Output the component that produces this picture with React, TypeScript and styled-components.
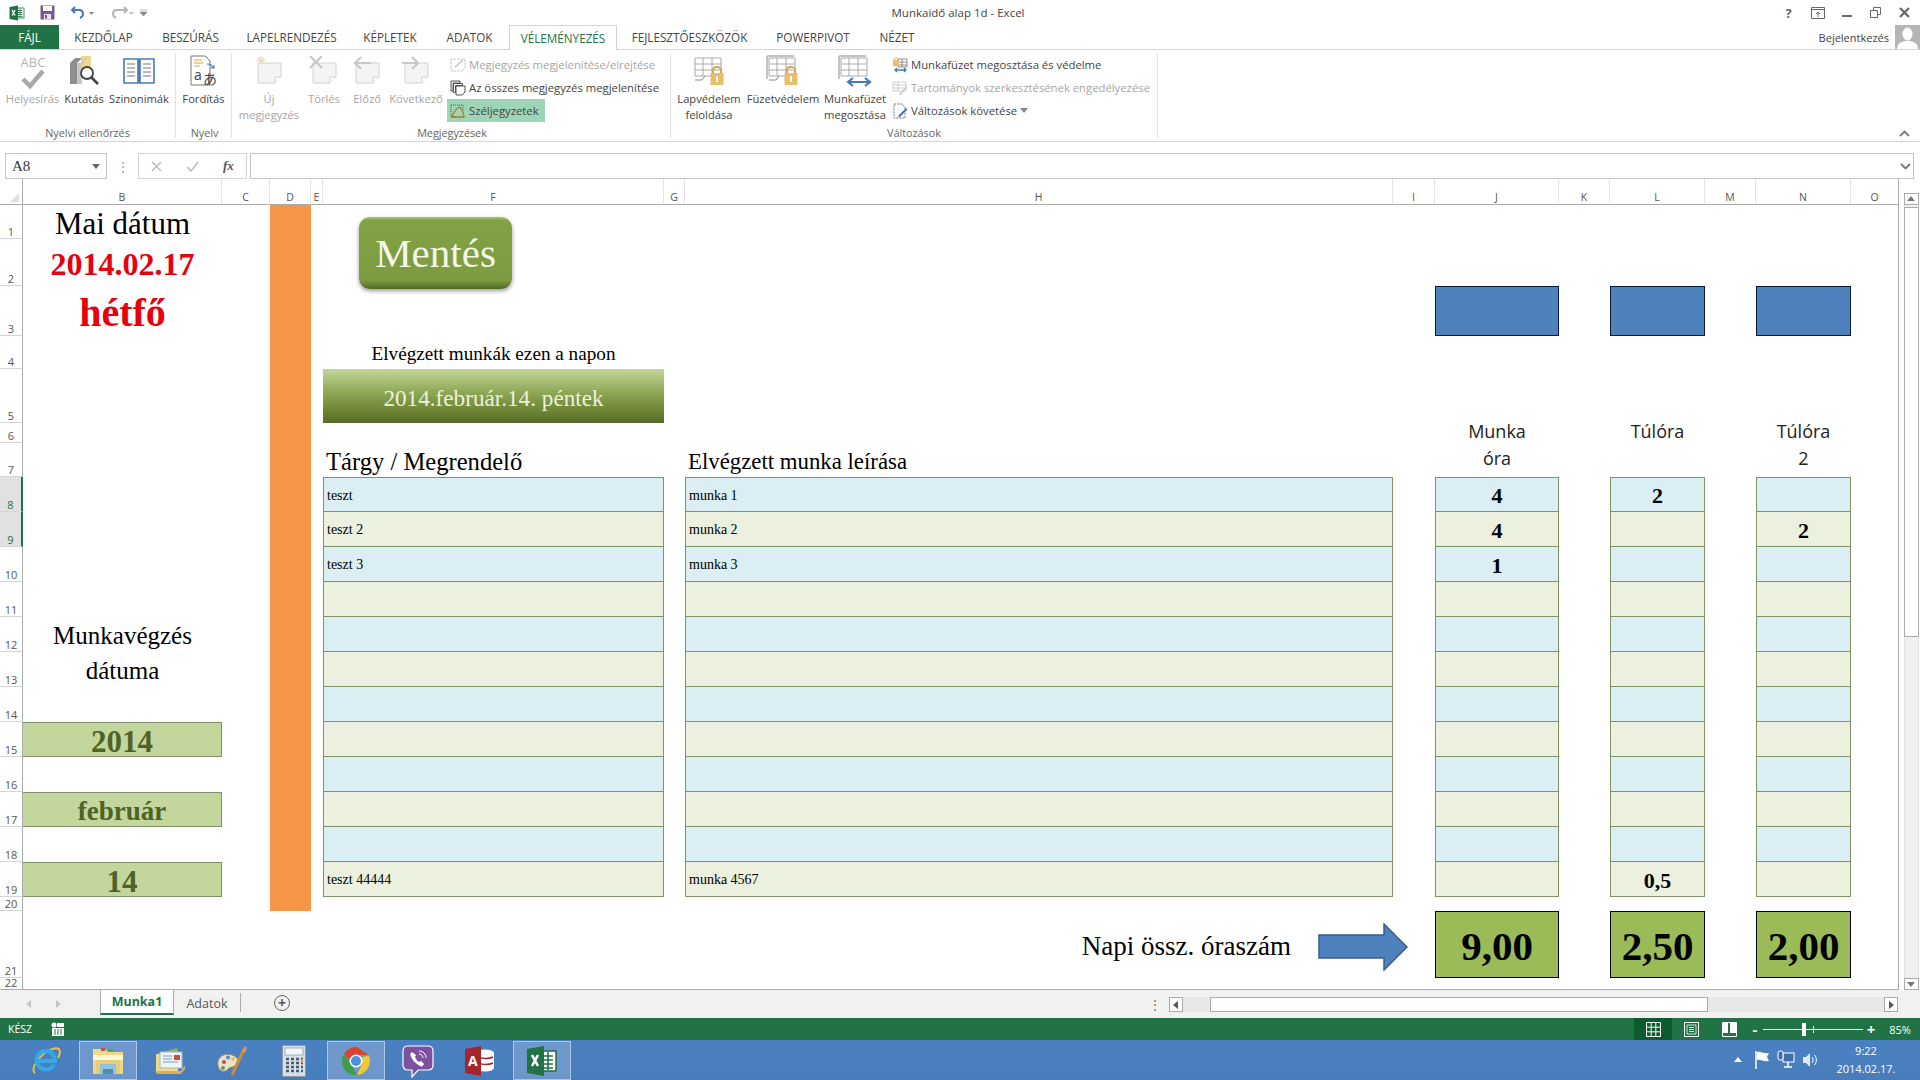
import React from 'react';
import styled, { createGlobalStyle } from 'styled-components';

const GlobalStyle = createGlobalStyle`
  html, body {
    margin: 0;
    padding: 0;
    background: #fff;
    overflow: hidden;
  }
`;

const UI_FONT = '"Open Sans", "Noto Sans", sans-serif';
const SERIF = '"Liberation Serif", "Times New Roman", serif';
const EXCEL_GREEN = '#217346';

const Window = styled.div`
  width: 1920px;
  height: 1080px;
  display: flex;
  flex-direction: column;
  font-family: ${UI_FONT};
  color: #444;
  overflow: hidden;
  background: #fff;
`;

/* title bar */
const TitleBar = styled.div`
  height: 25px;
  display: grid;
  grid-template-columns: 1fr auto 1fr;
  align-items: center;
`;

const QuickAccess = styled.div`
  display: flex;
  align-items: center;
  padding-left: 9px;
  gap: 15px;
`;

const QuickMenu = styled.svg`
  margin-left: -10px;
`;

const TitleText = styled.div`
  font-size: 11.5px;
  color: #444;
  margin-left: -4px;
`;

const WindowControls = styled.div`
  display: flex;
  justify-content: flex-end;
  align-items: center;
  padding-right: 1px;
`;

const WinButton = styled.div`
  width: 29px;
  height: 20px;
  display: flex;
  align-items: center;
  justify-content: center;
  color: #666;
  font-size: 13px;
  font-weight: 700;
`;

/* ribbon tabs */
const TabRow = styled.div`
  height: 25px;
  box-sizing: border-box;
  display: flex;
  border-bottom: 1px solid #d4d4d4;
`;

const RibbonTab = styled.div<{ $w: number; $active?: boolean; $file?: boolean }>`
  width: ${p => p.$w}px;
  box-sizing: border-box;
  display: flex;
  align-items: center;
  justify-content: center;
  font-size: 11.7px;
  line-height: 16px;
  height: ${p => (p.$active ? 25 : 24)}px;
  background: ${p => (p.$file ? EXCEL_GREEN : '#fff')};
  color: ${p => (p.$file ? '#fff' : p.$active ? EXCEL_GREEN : '#444')};
  ${p => p.$active && 'border: 1px solid #d4d4d4; border-bottom: none;'}
`;

const Account = styled.div`
  margin-left: auto;
  display: flex;
  align-items: center;
  gap: 6px;
  font-size: 11px;
  color: #444;
`;

/* ribbon */
const Ribbon = styled.div`
  height: 92px;
  box-sizing: border-box;
  display: flex;
  border-bottom: 1px solid #d4d4d4;
  position: relative;
`;

const RibbonGroup = styled.div<{ $w: number; $pad?: number; $line?: boolean }>`
  width: ${p => p.$w}px;
  box-sizing: border-box;
  margin-top: 3px;
  padding-left: ${p => p.$pad ?? 0}px;
  display: flex;
  flex-direction: column;
  height: 85px;
  ${p => p.$line && 'border-right: 1px solid #e1e1e1;'}
`;

const GroupBody = styled.div`
  flex: 1;
  display: flex;
`;

const GroupLabel = styled.div<{ $shift?: number }>`
  font-size: 10.8px;
  text-align: center;
  color: #666;
  line-height: 14px;
  height: 14px;
  margin: 0 0 -2px ${p => p.$shift ?? 0}px;
`;

const LargeButton = styled.div<{ $w: number; $off?: boolean }>`
  width: ${p => p.$w}px;
  display: flex;
  flex-direction: column;
  align-items: center;
  font-size: 11.2px;
  line-height: 16px;
  text-align: center;
  white-space: nowrap;
  color: ${p => (p.$off ? '#a6a6a6' : '#444')};
`;

const LargeIcon = styled.div`
  height: 36px;
  display: flex;
  align-items: center;
  justify-content: center;
  margin-bottom: 2px;
`;

const SmallColumn = styled.div`
  display: flex;
  flex-direction: column;
  align-items: flex-start;
`;

const SmallButton = styled.div<{ $off?: boolean; $on?: boolean }>`
  height: 23px;
  display: flex;
  align-items: center;
  gap: 3px;
  padding: 0 6px 0 3px;
  font-size: 11.3px;
  white-space: nowrap;
  color: ${p => (p.$off ? '#a6a6a6' : '#444')};
  background: ${p => (p.$on ? '#9fd5b7' : 'transparent')};
`;

const CollapseCaret = styled.svg`
  position: absolute;
  right: 10px;
  bottom: 4px;
`;

/* formula bar */
const FormulaRow = styled.div`
  height: 37px;
  box-sizing: border-box;
  padding: 11px 6px 0 5px;
  display: flex;
`;

const NameBox = styled.div`
  width: 102px;
  box-sizing: border-box;
  border: 1px solid #c6c6c6;
  display: flex;
  align-items: center;
  justify-content: space-between;
  padding: 0 6px 0 6px;
  font-family: ${SERIF};
  font-size: 15px;
  color: #333;
`;

const GripDots = styled.div`
  width: 31px;
  display: flex;
  align-items: center;
  justify-content: center;
  color: #9a9a9a;
  font-size: 12px;
`;

const FormulaButtons = styled.div`
  width: 109px;
  box-sizing: border-box;
  border: 1px solid #d4d4d4;
  display: flex;
  align-items: center;
  gap: 24px;
  padding-left: 12px;
  margin-right: 3px;
  color: #555;
`;

const FxLabel = styled.span`
  font-family: ${SERIF};
  font-style: italic;
  font-weight: 700;
  font-size: 13px;
`;

const FormulaInput = styled.div`
  flex: 1;
  box-sizing: border-box;
  border: 1px solid #c6c6c6;
  display: flex;
  align-items: center;
  justify-content: flex-end;
  padding-right: 2px;
`;

/* sheet */
const SheetArea = styled.div`
  height: 811px;
  display: flex;
`;

const SheetGrid = styled.div`
  position: relative;
  width: 1899px;
  height: 811px;
  display: grid;
  grid-template-columns: 23px 199px 48px 41px 12px 341px 21px 708px 42px 124px 51px 95px 51px 95px 48px;
  grid-template-rows: 26px 34px 47px 50px 33px 54px 20px 34px repeat(12, 35px) 14px 67px 12px;
  overflow: hidden;
  box-sizing: border-box;
  border-bottom: 1px solid #ababab;
  border-right: 1px solid #ababab;
`;

const ColHead = styled.div<{ $c: number }>`
  grid-column: ${p => p.$c};
  grid-row: 1;
  box-sizing: border-box;
  padding-top: 11px;
  font-size: 10.5px;
  line-height: 15px;
  text-align: center;
  color: #555;
  border-bottom: 1px solid #ababab;
  border-right: 1px solid #e4e4e4;
`;

const Corner = styled.div`
  grid-column: 1;
  grid-row: 1;
  box-sizing: border-box;
  border-bottom: 1px solid #ababab;
  border-right: 1px solid #ababab;
  position: relative;
  &::after {
    content: '';
    position: absolute;
    right: 3px;
    bottom: 2px;
    border-style: solid;
    border-width: 0 0 9px 9px;
    border-color: transparent transparent #dfdfdf transparent;
  }
`;

const RowHead = styled.div<{ $r: number; $sel?: boolean }>`
  grid-column: 1;
  grid-row: ${p => p.$r + 1};
  box-sizing: border-box;
  display: flex;
  align-items: flex-end;
  justify-content: center;
  font-size: 11px;
  line-height: 13px;
  color: ${p => (p.$sel ? EXCEL_GREEN : '#555')};
  background: ${p => (p.$sel ? '#e1e1e1' : '#fff')};
  border-bottom: 1px solid #d4d4d4;
  border-right: ${p => (p.$sel ? `2px solid ${EXCEL_GREEN}` : '1px solid #ababab')};
`;

const Cell = styled.div<{ $c: number; $r: number }>`
  grid-column: ${p => p.$c};
  grid-row: ${p => p.$r + 1};
  box-sizing: border-box;
  display: flex;
  align-items: center;
  justify-content: center;
  font-family: ${SERIF};
  color: #000;
  white-space: nowrap;
`;

const TodayLabel = styled(Cell)`
  font-size: 31px;
  padding-top: 4px;
`;

const TodayDate = styled(Cell)`
  font-size: 32px;
  font-weight: 700;
  color: #e8000d;
  padding-top: 3px;
`;

const TodayDay = styled(Cell)`
  font-size: 40px;
  font-weight: 700;
  color: #e8000d;
  padding-top: 2px;
`;

const WorkDateLabel = styled(Cell)`
  font-size: 25px;
  padding-top: 2px;
`;

const DateChip = styled(Cell)<{ $size: number }>`
  font-size: ${p => p.$size}px;
  font-weight: 700;
  color: #4f6228;
  background: #c3d69b;
  border: 1px solid #7f8f6a;
  border-left: none;
  padding-top: 4px;
`;

const OrangeBar = styled.div`
  grid-column: 4;
  grid-row: 2 / 22;
  background: #f79646;
`;

const CaptionCell = styled(Cell)`
  font-size: 19.2px;
  padding-top: 3px;
`;

const BandCell = styled(Cell)`
  font-size: 23.2px;
  padding-top: 4px;
  color: #ebf1de;
  background: linear-gradient(#c3d69b 0%, #8fa957 42%, #6f8736 75%, #566b29 100%);
`;

const ColumnTitle = styled(Cell)<{ $size: number }>`
  font-size: ${p => p.$size}px;
  justify-content: flex-start;
  align-items: flex-end;
  padding: 0 0 1px 3px;
  line-height: 28px;
`;

const HourHead = styled(Cell)`
  font-family: ${UI_FONT};
  font-size: 18px;
  color: #222;
  padding-bottom: 5px;
`;

const DataCell = styled(Cell)<{ $tint: 'blue' | 'green'; $first?: boolean; $left?: boolean }>`
  background: ${p => (p.$tint === 'blue' ? '#daeef3' : '#ebf1de')};
  border: 1px solid #7f9364;
  border-top: ${p => (p.$first ? '1px solid #7f9364' : 'none')};
  justify-content: ${p => (p.$left ? 'flex-start' : 'center')};
  padding: ${p => (p.$left ? '2px 0 0 3px' : '3px 0 0')};
  font-size: ${p => (p.$left ? 14 : 22)}px;
  font-weight: ${p => (p.$left ? 400 : 700)};
`;

const BlueBox = styled(Cell)`
  background: #4f81bd;
  border: 1px solid #0b1a33;
`;

const TotalLabel = styled(Cell)`
  font-size: 27px;
  justify-content: flex-end;
  padding: 3px 102px 0 0;
`;

const TotalBox = styled(Cell)`
  background: #9bbb59;
  border: 1px solid #000;
  font-size: 41px;
  font-weight: 700;
  padding-top: 3px;
`;

const SaveButton = styled.div`
  position: absolute;
  left: 359px;
  top: 38px;
  width: 153px;
  height: 72px;
  box-sizing: border-box;
  border-radius: 11px;
  display: flex;
  align-items: center;
  justify-content: center;
  font-family: ${SERIF};
  font-size: 41px;
  color: #f4f8ea;
  background: linear-gradient(#a9c476 0%, #82a044 5%, #7d9b40 88%, #5d7a2c 96%, #4f6a25 100%);
  box-shadow: 0 2px 4px rgba(0, 0, 0, 0.4);
`;

const ShapeArrow = styled.svg`
  position: absolute;
  left: 1318px;
  top: 744px;
`;

/* scrollbars */
const VScroll = styled.div`
  width: 21px;
  display: flex;
  flex-direction: column;
  align-items: center;
  box-sizing: border-box;
  padding: 14px 0 0 3px;
  background: #fff;
`;

const ScrollButton = styled.div<{ $w?: number; $h?: number }>`
  width: ${p => p.$w ?? 15}px;
  height: ${p => p.$h ?? 12}px;
  flex: none;
  box-sizing: border-box;
  border: 1px solid #ababab;
  background: #fff;
  display: flex;
  align-items: center;
  justify-content: center;
`;

const VTrack = styled.div`
  width: 15px;
  flex: 1;
  background: #f0f0f0;
  box-sizing: border-box;
  border-left: 1px solid #e4e4e4;
  border-right: 1px solid #e4e4e4;
`;

const VThumb = styled.div`
  width: 15px;
  height: 430px;
  margin: 2px 0 0 -1px;
  box-sizing: border-box;
  background: #fff;
  border: 1px solid #ababab;
`;

const SheetTabs = styled.div`
  height: 28px;
  box-sizing: border-box;
  display: flex;
  align-items: stretch;
  background: #f1f1f1;
`;

const TabNav = styled.div`
  width: 100px;
  display: flex;
  align-items: center;
  padding-left: 25px;
  box-sizing: border-box;
  gap: 21px;
`;

const SheetTab = styled.div<{ $active?: boolean; $w: number }>`
  width: ${p => p.$w}px;
  height: 26px;
  box-sizing: border-box;
  display: flex;
  align-items: center;
  justify-content: center;
  font-size: 12.5px;
  font-weight: ${p => (p.$active ? 700 : 400)};
  color: ${p => (p.$active ? EXCEL_GREEN : '#555')};
  background: ${p => (p.$active ? '#fff' : 'transparent')};
  border-bottom: ${p => (p.$active ? `2px solid ${EXCEL_GREEN}` : 'none')};
  ${p => p.$active && 'border-left: 1px solid #ababab; border-right: 1px solid #ababab;'}
  ${p => p.$active && 'margin-top: -1px; padding-top: 1px;'}
`;

const TabDivider = styled.div`
  width: 1px;
  height: 19px;
  margin-top: 3px;
  background: #ababab;
`;

const AddSheet = styled.div`
  margin: 5px 0 0 33px;
  width: 16px;
  height: 16px;
  box-sizing: border-box;
  border: 1px solid #666;
  border-radius: 50%;
  color: #555;
  display: flex;
  align-items: center;
  justify-content: center;
  font-size: 14px;
  font-weight: 700;
  line-height: 1;
`;

const HScroll = styled.div`
  margin: 7px 22px 0 auto;
  height: 15px;
  display: flex;
  align-items: center;
`;

const HDots = styled.div`
  width: 20px;
  color: #777;
  font-size: 12px;
  text-align: left;
`;

const HTrack = styled.div`
  width: 701px;
  height: 15px;
  background: #e8e8e8;
  padding-left: 27px;
  box-sizing: border-box;
`;

const HThumb = styled.div`
  width: 498px;
  height: 15px;
  box-sizing: border-box;
  background: #fff;
  border: 1px solid #ababab;
`;

/* status bar */
const StatusBar = styled.div`
  height: 22px;
  background: ${EXCEL_GREEN};
  color: #fff;
  display: flex;
  align-items: center;
  font-size: 10.5px;
  padding-left: 8px;
`;

const StatusIcon = styled.svg`
  margin-left: 19px;
`;

const StatusRight = styled.div`
  margin-left: auto;
  display: flex;
  align-items: center;
  height: 22px;
`;

const ViewButton = styled.div<{ $on?: boolean }>`
  width: 38px;
  height: 22px;
  display: flex;
  align-items: center;
  justify-content: center;
  background: ${p => (p.$on ? '#0a5c2e' : 'transparent')};
`;

const ZoomGroup = styled.div`
  width: 126px;
  margin-left: 2px;
  display: flex;
  align-items: center;
`;

const ZoomSign = styled.div`
  width: 10px;
  text-align: center;
  font-size: 15px;
  font-weight: 700;
`;

const ZoomTrack = styled.div`
  flex: 1;
  height: 1px;
  background: #fff;
  margin: 0 3px;
  position: relative;
`;

const ZoomThumb = styled.div`
  position: absolute;
  left: 39px;
  top: -6px;
  width: 4px;
  height: 13px;
  background: #fff;
`;

const ZoomTick = styled.div`
  position: absolute;
  left: 50px;
  top: -3px;
  width: 1px;
  height: 7px;
  background: #fff;
`;

const ZoomValue = styled.div`
  width: 40px;
  margin-left: 4px;
  text-align: center;
  font-size: 11px;
`;

/* taskbar */
const Taskbar = styled.div`
  height: 40px;
  background: linear-gradient(#4a80c2, #4a7fbf 60%, #477bb9);
  display: flex;
  padding-left: 15px;
  color: #fff;
`;

const TaskSlot = styled.div<{ $on?: boolean }>`
  width: 58px;
  margin: 1px 2px 0;
  box-sizing: border-box;
  display: flex;
  align-items: center;
  justify-content: center;
  ${p =>
    p.$on &&
    'background: rgba(255,255,255,0.2); border: 1px solid rgba(255,255,255,0.45);'}
`;

const Tray = styled.div`
  margin-left: auto;
  display: flex;
  align-items: center;
`;

const TrayIcon = styled.div`
  width: 24px;
  display: flex;
  align-items: center;
  justify-content: center;
`;

const Clock = styled.div`
  width: 98px;
  box-sizing: border-box;
  text-align: center;
  font-size: 11px;
  line-height: 18px;
  padding-right: 10px;
`;

/* icons */
const ExcelMark: React.FC<{ s: number }> = ({ s }) => (
  <svg width={s} height={s} viewBox="0 0 32 32">
    <rect x="14" y="6" width="16" height="20" fill="#fff" stroke="#217346" strokeWidth="1.6" />
    <path d="M18 11h9M18 15h9M18 19h9M18 23h9M22 7v18" stroke="#217346" strokeWidth="1.6" />
    <path d="M1 4l17-3v30L1 28z" fill="#217346" />
    <path d="M6 10l6 11M12 10l-6 11" stroke="#fff" strokeWidth="2.6" />
  </svg>
);

const SaveIcon = () => (
  <svg width="15" height="15" viewBox="0 0 15 15">
    <rect x="0.5" y="0.5" width="14" height="14" fill="#7a5a96" />
    <rect x="3" y="1" width="9" height="5" fill="#fff" />
    <rect x="4" y="9" width="7" height="5.5" fill="#e9e3ee" />
    <rect x="5" y="10" width="2" height="3.5" fill="#7a5a96" />
  </svg>
);

const UndoIcon: React.FC<{ off?: boolean }> = ({ off }) => (
  <svg width="25" height="15" viewBox="0 0 25 15" fill="none">
    {off ? (
      <path d="M14 2l3 3-3 3M16 5H7c-3 0-4 2-4 4s1 3 3 4" stroke="#b5b5b5" strokeWidth="2" />
    ) : (
      <path d="M5 2L2 5l3 3M3 5h6c3 0 4 2 4 4s-1 3-3 4" stroke="#4a7ab5" strokeWidth="2" />
    )}
    <path d="M19 7h5l-2.5 3z" fill={off ? '#c0c0c0' : '#888'} />
  </svg>
);

const NoteIcon: React.FC<{ kind: 'new' | 'del' | 'prev' | 'next' }> = ({ kind }) => (
  <svg width="30" height="30" viewBox="0 0 30 30" fill="none">
    <path d="M4 7h23v14l-6 6H4z" fill="#f4f4f4" stroke="#d2d2d2" />
    <path d="M21 27v-6h6" stroke="#d2d2d2" fill="#fff" />
    {kind === 'new' && (
      <path d="M7 0v9M2.5 4.500h9M3.800 1.300l6.400 6.400M10.200 1.300l-6.400 6.400" stroke="#e6e0c8" strokeWidth="1.400" />
    )}
    {kind === 'del' && <path d="M1 0l12 12M13 0L1 12" stroke="#c8c8c8" strokeWidth="2.200" />}
    {kind === 'prev' && <path d="M19 7H3M9 1L3 7l6 6" stroke="#c8c8c8" strokeWidth="2.200" />}
    {kind === 'next' && <path d="M1 7h16M11 1l6 6-6 6" stroke="#c8c8c8" strokeWidth="2.200" />}
  </svg>
);

const SpellIcon = () => (
  <svg width="30" height="36" viewBox="0 0 30 36" fill="none">
    <text x="15" y="14" textAnchor="middle" fontFamily={UI_FONT} fontSize="13" fill="#b4b4b4">
      ABC
    </text>
    <path d="M5 26l7 7L25 18" stroke="#a8a8a8" strokeWidth="4.500" />
  </svg>
);

const ResearchIcon = () => (
  <svg width="32" height="32" viewBox="0 0 32 32" fill="none">
    <path d="M13 1h10v20H13z" fill="#f0d58c" />
    <path d="M2 8l5-5h7l-5 5v21H2z" fill="#8f8f8f" />
    <rect x="9" y="8" width="5" height="21" fill="#c8c8c8" />
    <path d="M14 8l5-6" stroke="#bbb" />
    <circle cx="19" cy="18" r="6" fill="#fff" stroke="#444" strokeWidth="1.800" />
    <path d="M23 22l7 7" stroke="#444" strokeWidth="2.600" />
  </svg>
);

const ThesaurusIcon = () => (
  <svg width="32" height="28" viewBox="0 0 32 28" fill="none">
    <path d="M1 2h14v24H1zM17 2h14v24H17z" fill="#fff" stroke="#4a7ab5" strokeWidth="1.600" />
    <path d="M15 2h2v24h-2z" fill="#4a7ab5" />
    <path d="M4 7h8M4 11h8M4 15h8M4 19h8M20 7h8M20 11h8M20 15h8M20 19h8" stroke="#777" />
  </svg>
);

const TranslateIcon = () => (
  <svg width="30" height="32" viewBox="0 0 30 32" fill="none">
    <path d="M2 1h14l5 5v24H2z" fill="#fff" stroke="#777" />
    <path d="M5 5h8M5 8h9M5 11h6" stroke="#d5a93a" strokeWidth="1.200" />
    <path d="M18 9c3 0 5 1 6 4M25 10v3h-3" stroke="#4a7ab5" strokeWidth="1.200" />
    <text x="5" y="25" fontFamily={UI_FONT} fontSize="14" fill="#444">
      a
    </text>
    <text x="14" y="29" fontFamily='"Noto Sans CJK JP", sans-serif' fontSize="14" fill="#444">
      あ
    </text>
  </svg>
);

const LockSheetIcon: React.FC<{ kind: 'lock' | 'book' | 'share' }> = ({ kind }) => (
  <svg width="34" height="34" viewBox="0 0 34 34" fill="none">
    {kind !== 'lock' && <path d="M1 25V2h27" stroke="#888" />}
    <path d="M3 4h26v18H3zM3 10h26M3 16h26M11 4v18M20 4v18" stroke="#a0a0a0" fill="#fff" strokeWidth="0.900" />
    {kind !== 'share' && (
      <>
        <path d="M21 19v-3c0-4 8-4 8 0v3" stroke="#d5a95c" strokeWidth="2" />
        <rect x="18.500" y="19" width="13" height="12" fill="#e8bd6b" />
        <rect x="24" y="22" width="2" height="6" fill="#fff" />
      </>
    )}
    {kind === 'share' && (
      <path d="M11 28h20M15 24l-5 4 5 4M27 24l5 4-5 4" stroke="#4a7ab5" strokeWidth="2.200" />
    )}
    {kind !== 'share' && <path d="M3 26h7l3-4" stroke="#888" />}
  </svg>
);

const MiniIcon: React.FC<{ kind: 'show' | 'all' | 'ink' | 'protect' | 'ranges' | 'track' }> = ({ kind }) => (
  <svg width="16" height="16" viewBox="0 0 16 16" fill="none">
    {kind === 'show' && (
      <>
        <path d="M1 2h14v9l-3 3H1z" stroke="#c0c0c0" strokeDasharray="2 1" />
        <path d="M5 10l8-7" stroke="#c0c0c0" strokeWidth="1.500" />
      </>
    )}
    {kind === 'all' && (
      <>
        <path d="M1 1h9v2H3v8H1z" fill="#fff" stroke="#555" />
        <path d="M3.500 3.500h9v2h-7v7h-2z" fill="#fff" stroke="#555" />
        <path d="M6 6h9v6l-3 3H6z" fill="#fff" stroke="#555" />
      </>
    )}
    {kind === 'ink' && (
      <>
        <path d="M1 2h12M1 2v12M1 14h6M13 2v5" stroke="#555" strokeDasharray="1 1" />
        <path d="M2 14C4 8 7 5 10 4c2 3 4 6 4 10z" stroke="#a67a2a" strokeWidth="1.300" />
      </>
    )}
    {kind === 'protect' && (
      <>
        <path d="M6 2h9v8H6zM6 5h9M6 8h9M10 2v8" stroke="#777" fill="#fff" strokeWidth="0.800" />
        <rect x="1" y="3" width="6" height="6" fill="#e8bd6b" />
        <path d="M2 3c0-3 4-3 4 0" stroke="#d5a95c" />
        <path d="M3 13h11M5 11l-2 2 2 2M12 11l2 2-2 2" stroke="#4a7ab5" strokeWidth="1.300" />
      </>
    )}
    {kind === 'ranges' && (
      <>
        <path d="M1 2h13v9H1zM1 5h13M1 8h13M6 2v9" stroke="#c4c4c4" fill="#fff" strokeWidth="0.800" />
        <path d="M7 14l7-7 1 1-7 7z" fill="#c4c4c4" />
      </>
    )}
    {kind === 'track' && (
      <>
        <path d="M2 1h8l3 3v11H2z" stroke="#777" fill="#fff" strokeDasharray="2 1" />
        <path d="M6 13l8-8 1.500 1.500-8 8z" fill="#4a7ab5" />
      </>
    )}
  </svg>
);

const Caret: React.FC<{ c?: string }> = ({ c = '#666' }) => (
  <svg width="8" height="5" viewBox="0 0 8 5">
    <path d="M0 0h8L4 5z" fill={c} />
  </svg>
);

const Chevron = () => (
  <svg width="11" height="7" viewBox="0 0 11 7" fill="none">
    <path d="M1 1l4.500 4.500L10 1" stroke="#777" strokeWidth="1.800" />
  </svg>
);

const Tri: React.FC<{ dir: 'up' | 'down' | 'left' | 'right'; c?: string }> = ({ dir, c = '#777' }) => {
  const d = { up: 'M0 6L4 1l4 5z', down: 'M0 2l4 5 4-5z', left: 'M6 0L1 4l5 4z', right: 'M2 0l5 4-5 4z' }[dir];
  return (
    <svg width="8" height="8" viewBox="0 0 8 8">
      <path d={d} fill={c} />
    </svg>
  );
};

const IeIcon = () => (
  <svg width="32" height="32" viewBox="0 0 32 32" fill="none">
    <path d="M5 28c-5-4 4-18 15-23 6-3 10-2 10 2 0 2-1 4-2 6" stroke="#f2c230" strokeWidth="1.800" />
    <path d="M24 20a9.500 9.500 0 0 1-17-2c-2-7 3-12 9-12 6 0 9 5 9 10H8" stroke="#35a9e6" strokeWidth="4" />
  </svg>
);

const FolderIcon = () => (
  <svg width="34" height="32" viewBox="0 0 34 32" fill="none">
    <path d="M2 4h12l3 3h15v22H2z" fill="#f2d98a" />
    <path d="M2 10h30v5H2z" fill="#fff6d4" />
    <rect x="10" y="3" width="4" height="3" fill="#c9503a" />
    <rect x="17" y="4" width="5" height="3" fill="#5aa14a" />
    <path d="M5 15h24v14H5z" fill="#e9cd76" />
    <path d="M9 19h16v10H9z" fill="#8fc5dd" />
    <path d="M12 24h10v5H12z" fill="#4a8db5" />
  </svg>
);

const LibraryIcon = () => (
  <svg width="32" height="30" viewBox="0 0 32 30" fill="none">
    <path d="M3 8l20-6 2 6z" fill="#8fb257" />
    <path d="M2 25V8h22v17z" fill="#f2d98a" />
    <rect x="6" y="6" width="22" height="16" fill="#eef3f8" stroke="#a9b9c9" />
    <rect x="20" y="9" width="6" height="5" fill="#c9503a" />
    <path d="M9 10h9M9 13h9M9 16h15" stroke="#6fa0c8" />
    <path d="M1 25h26l4-6v4l-4 5H3z" fill="#dcae55" />
  </svg>
);

const PaintIcon = () => (
  <svg width="32" height="32" viewBox="0 0 32 32" fill="none">
    <path d="M2 21C0 12 9 7 16 10c6 2 7 6 5 9-2 4-7 2-9 5s-8 4-10-3z" fill="#e9e2cf" stroke="#9a8d6c" />
    <circle cx="8" cy="17" r="2" fill="#d44b3a" />
    <circle cx="12" cy="12.500" r="2" fill="#4a8dcc" />
    <circle cx="7" cy="23" r="2" fill="#5aa14a" />
    <circle cx="17" cy="14" r="1.800" fill="#e9b83a" />
    <path d="M16 30L28 4" stroke="#c98d3a" strokeWidth="3" />
    <path d="M26 6l3-5 2 2-2 5z" fill="#c9a26a" />
  </svg>
);

const CalcIcon = () => (
  <svg width="24" height="32" viewBox="0 0 24 32" fill="none">
    <rect x="0.500" y="0.500" width="23" height="31" rx="1" fill="#d7dfe8" stroke="#8a98a8" />
    <rect x="3" y="3" width="18" height="7" fill="#f2f5f8" stroke="#7a8a9a" strokeWidth="0.600" />
    <path
      d="M4 14h3M9 14h3M14 14h3M19 14h2M4 18h3M9 18h3M14 18h3M19 18h2M4 22h3M9 22h3M14 22h3M19 22h2M4 26h3M9 26h3M14 26h3M19 26h2"
      stroke="#4a5a6a"
      strokeWidth="2.400"
    />
    <path d="M19 14h2v4h-2z" fill="#d09a3a" />
  </svg>
);

const ChromeIcon = () => (
  <svg width="30" height="30" viewBox="-15 -15 30 30">
    <path d="M-12.100-7A14 14 0 0 1 0-14h1L12.600-6H0a6 6 0 0 0-6 6z" fill="#d9442e" />
    <path d="M-12.100-7L-5.200 3 1 14A14 14 0 0 1-12.100-7z" fill="#3f9d48" />
    <path d="M12.600-6A14 14 0 0 1 1 14L6 3 5-3z" fill="#f0c832" />
    <circle r="6.500" fill="#fff" />
    <circle r="5" fill="#4d8fe0" />
  </svg>
);

const ViberIcon = () => (
  <svg width="32" height="34" viewBox="0 0 32 34" fill="none">
    <path d="M6 2h20c3 0 5 2 5 5v14c0 3-2 5-5 5H16l-6 7v-7H6c-3 0-5-2-5-5V7c0-3 2-5 5-5z" fill="#7c519e" stroke="#fff" strokeWidth="1.200" />
    <path d="M10 8c-2 1-2 3-1 5 2 4 5 7 9 9 2 1 3 0 4-2l-3-3-2 1c-2-1-3-3-4-5l1-2z" fill="#fff" />
    <path d="M17 7c4 0 7 3 7 7M17 10c2 0 4 2 4 4" stroke="#fff" />
  </svg>
);

const AccessIcon = () => (
  <svg width="32" height="32" viewBox="0 0 32 32" fill="none">
    <ellipse cx="21" cy="8" rx="9" ry="3.500" fill="#fff" />
    <rect x="12" y="8" width="18" height="15" fill="#fff" />
    <ellipse cx="21" cy="23" rx="9" ry="3.500" fill="#fff" />
    <path d="M15 12c3 2 10 2 14 0M15 18c3 2 10 2 14 0" stroke="#a4262c" strokeWidth="1.500" />
    <path d="M1 4l16-3v30L1 28z" fill="#a4262c" />
    <text x="4" y="21" fontFamily={UI_FONT} fontSize="14" fontWeight="700" fill="#fff">
      A
    </text>
  </svg>
);

const RIBBON_TABS = [
  { t: 'KEZDŐLAP', w: 89 },
  { t: 'BESZÚRÁS', w: 85 },
  { t: 'LAPELRENDEZÉS', w: 117 },
  { t: 'KÉPLETEK', w: 80 },
  { t: 'ADATOK', w: 79 },
  { t: 'VÉLEMÉNYEZÉS', w: 108, active: true },
  { t: 'FEJLESZTŐESZKÖZÖK', w: 145 },
  { t: 'POWERPIVOT', w: 102 },
  { t: 'NÉZET', w: 66 },
];

const COLUMNS = ['B', 'C', 'D', 'E', 'F', 'G', 'H', 'I', 'J', 'K', 'L', 'M', 'N', 'O'];
const ROW_NUMBERS = Array.from({ length: 22 }, (_, i) => i + 1);
const TABLE_ROWS = Array.from({ length: 12 }, (_, i) => i + 8);

const SUBJECTS: Record<number, string> = { 8: 'teszt', 9: 'teszt 2', 10: 'teszt 3', 19: 'teszt 44444' };
const WORKS: Record<number, string> = { 8: 'munka 1', 9: 'munka 2', 10: 'munka 3', 19: 'munka 4567' };
const HOURS: Record<number, Record<number, string>> = {
  10: { 8: '4', 9: '4', 10: '1' },
  12: { 8: '2', 19: '0,5' },
  14: { 9: '2' },
};

const tint = (row: number) => (row % 2 === 0 ? 'blue' : 'green') as 'blue' | 'green';

export default function App() {
  return (
    <Window>
      <GlobalStyle />
      <TitleBar>
        <QuickAccess>
          <ExcelMark s={16} />
          <SaveIcon />
          <UndoIcon />
          <UndoIcon off />
          <QuickMenu width="7" height="9" viewBox="0 0 7 9">
            <path d="M0 2h7M0 4l3.500 4L7 4z" fill="#888" stroke="#888" strokeWidth="0.600" />
          </QuickMenu>
        </QuickAccess>
        <TitleText>Munkaidő alap 1d - Excel</TitleText>
        <WindowControls>
          <WinButton>?</WinButton>
          <WinButton>
            <svg width="14" height="12" viewBox="0 0 14 12" fill="none">
              <path d="M.5.500h13v11H.5zM.5 2.500h13" stroke="#666" />
              <path d="M7 10V5M5 7l2-2 2 2" stroke="#666" />
            </svg>
          </WinButton>
          <WinButton>
            <svg width="10" height="10" viewBox="0 0 10 10">
              <rect y="7" width="10" height="2" fill="#666" />
            </svg>
          </WinButton>
          <WinButton>
            <svg width="11" height="11" viewBox="0 0 11 11" fill="none">
              <path d="M.5 3.500h7v7h-7zM3.500 3V.5h7v7H8" stroke="#666" />
            </svg>
          </WinButton>
          <WinButton>
            <svg width="11" height="11" viewBox="0 0 11 11" fill="none">
              <path d="M1 1l9 9M10 1l-9 9" stroke="#666" strokeWidth="2.200" />
            </svg>
          </WinButton>
        </WindowControls>
      </TitleBar>

      <TabRow>
        <RibbonTab $w={59} $file>
          FÁJL
        </RibbonTab>
        {RIBBON_TABS.map(tab => (
          <RibbonTab key={tab.t} $w={tab.w} $active={tab.active}>
            {tab.t}
          </RibbonTab>
        ))}
        <Account>
          Bejelentkezés
          <svg width="25" height="24" viewBox="0 0 25 24">
            <rect width="25" height="24" fill="#b5b5b5" />
            <ellipse cx="12.500" cy="9" rx="5" ry="6.500" fill="#fff" />
            <path d="M2 24c0-6 5-8 10.500-8S23 18 23 24z" fill="#fff" />
          </svg>
        </Account>
      </TabRow>

      <Ribbon>
        <RibbonGroup $w={176} $pad={5} $line>
          <GroupBody>
            <LargeButton $w={55} $off>
              <LargeIcon>
                <SpellIcon />
              </LargeIcon>
              Helyesírás
            </LargeButton>
            <LargeButton $w={48}>
              <LargeIcon>
                <ResearchIcon />
              </LargeIcon>
              Kutatás
            </LargeButton>
            <LargeButton $w={62}>
              <LargeIcon>
                <ThesaurusIcon />
              </LargeIcon>
              Szinonimák
            </LargeButton>
          </GroupBody>
          <GroupLabel $shift={-5}>Nyelvi ellenőrzés</GroupLabel>
        </RibbonGroup>

        <RibbonGroup $w={56} $line>
          <GroupBody>
            <LargeButton $w={56}>
              <LargeIcon>
                <TranslateIcon />
              </LargeIcon>
              Fordítás
            </LargeButton>
          </GroupBody>
          <GroupLabel $shift={2}>Nyelv</GroupLabel>
        </RibbonGroup>

        <RibbonGroup $w={439} $pad={7} $line>
          <GroupBody>
            <LargeButton $w={60} $off>
              <LargeIcon>
                <NoteIcon kind="new" />
              </LargeIcon>
              Új
              <br />
              megjegyzés
            </LargeButton>
            <LargeButton $w={50} $off>
              <LargeIcon>
                <NoteIcon kind="del" />
              </LargeIcon>
              Törlés
            </LargeButton>
            <LargeButton $w={36} $off>
              <LargeIcon>
                <NoteIcon kind="prev" />
              </LargeIcon>
              Előző
            </LargeButton>
            <LargeButton $w={62} $off>
              <LargeIcon>
                <NoteIcon kind="next" />
              </LargeIcon>
              Következő
            </LargeButton>
            <SmallColumn>
              <SmallButton $off>
                <MiniIcon kind="show" />
                Megjegyzés megjelenítése/elrejtése
              </SmallButton>
              <SmallButton>
                <MiniIcon kind="all" />
                Az összes megjegyzés megjelenítése
              </SmallButton>
              <SmallButton $on>
                <MiniIcon kind="ink" />
                Széljegyzetek
              </SmallButton>
            </SmallColumn>
          </GroupBody>
          <GroupLabel $shift={-5}>Megjegyzések</GroupLabel>
        </RibbonGroup>

        <RibbonGroup $w={487} $pad={2} $line>
          <GroupBody>
            <LargeButton $w={72}>
              <LargeIcon>
                <LockSheetIcon kind="lock" />
              </LargeIcon>
              Lapvédelem
              <br />
              feloldása
            </LargeButton>
            <LargeButton $w={76}>
              <LargeIcon>
                <LockSheetIcon kind="book" />
              </LargeIcon>
              Füzetvédelem
            </LargeButton>
            <LargeButton $w={68}>
              <LargeIcon>
                <LockSheetIcon kind="share" />
              </LargeIcon>
              Munkafüzet
              <br />
              megosztása
            </LargeButton>
            <SmallColumn>
              <SmallButton>
                <MiniIcon kind="protect" />
                Munkafüzet megosztása és védelme
              </SmallButton>
              <SmallButton $off>
                <MiniIcon kind="ranges" />
                Tartományok szerkesztésének engedélyezése
              </SmallButton>
              <SmallButton>
                <MiniIcon kind="track" />
                Változások követése
                <Caret c="#888" />
              </SmallButton>
            </SmallColumn>
          </GroupBody>
          <GroupLabel $shift={-2}>Változások</GroupLabel>
        </RibbonGroup>

        <CollapseCaret width="11" height="7" viewBox="0 0 11 7" fill="none">
          <path d="M1 6l4.500-4.500L10 6" stroke="#777" strokeWidth="1.800" />
        </CollapseCaret>
      </Ribbon>

      <FormulaRow>
        <NameBox>
          A8
          <Caret />
        </NameBox>
        <GripDots>⋮</GripDots>
        <FormulaButtons>
          <svg width="11" height="11" viewBox="0 0 11 11" fill="none">
            <path d="M1 1l9 9M10 1l-9 9" stroke="#bbb" strokeWidth="1.500" />
          </svg>
          <svg width="13" height="11" viewBox="0 0 13 11" fill="none">
            <path d="M1 6l4 4 7-9" stroke="#bbb" strokeWidth="1.500" />
          </svg>
          <FxLabel>fx</FxLabel>
        </FormulaButtons>
        <FormulaInput>
          <Chevron />
        </FormulaInput>
      </FormulaRow>

      <SheetArea>
        <SheetGrid>
          <Corner />
          {COLUMNS.map((c, i) => (
            <ColHead key={c} $c={i + 2}>
              {c}
            </ColHead>
          ))}
          {ROW_NUMBERS.map(r => (
            <RowHead key={r} $r={r} $sel={r === 8 || r === 9}>
              {r}
            </RowHead>
          ))}

          <TodayLabel $c={2} $r={1}>
            Mai dátum
          </TodayLabel>
          <TodayDate $c={2} $r={2}>
            2014.02.17
          </TodayDate>
          <TodayDay $c={2} $r={3}>
            hétfő
          </TodayDay>
          <WorkDateLabel $c={2} $r={12}>
            Munkavégzés
          </WorkDateLabel>
          <WorkDateLabel $c={2} $r={13}>
            dátuma
          </WorkDateLabel>
          <DateChip $c={2} $r={15} $size={31}>
            2014
          </DateChip>
          <DateChip $c={2} $r={17} $size={27}>
            február
          </DateChip>
          <DateChip $c={2} $r={19} $size={31}>
            14
          </DateChip>

          <OrangeBar />

          <CaptionCell $c={6} $r={4}>
            Elvégzett munkák ezen a napon
          </CaptionCell>
          <BandCell $c={6} $r={5}>
            2014.február.14. péntek
          </BandCell>
          <ColumnTitle $c={6} $r={7} $size={24.6}>
            Tárgy / Megrendelő
          </ColumnTitle>
          <ColumnTitle $c={8} $r={7} $size={22.8}>
            Elvégzett munka leírása
          </ColumnTitle>

          {[10, 12, 14].map(c => (
            <BlueBox key={c} $c={c} $r={3} />
          ))}

          <HourHead $c={10} $r={6}>
            Munka
          </HourHead>
          <HourHead $c={10} $r={7}>
            óra
          </HourHead>
          <HourHead $c={12} $r={6}>
            Túlóra
          </HourHead>
          <HourHead $c={14} $r={6}>
            Túlóra
          </HourHead>
          <HourHead $c={14} $r={7}>
            2
          </HourHead>

          {TABLE_ROWS.map(r => (
            <React.Fragment key={r}>
              <DataCell $c={6} $r={r} $tint={tint(r)} $first={r === 8} $left>
                {SUBJECTS[r]}
              </DataCell>
              <DataCell $c={8} $r={r} $tint={tint(r)} $first={r === 8} $left>
                {WORKS[r]}
              </DataCell>
              {[10, 12, 14].map(c => (
                <DataCell key={c} $c={c} $r={r} $tint={tint(r)} $first={r === 8}>
                  {HOURS[c][r]}
                </DataCell>
              ))}
            </React.Fragment>
          ))}

          <TotalLabel $c={8} $r={21}>
            Napi össz. óraszám
          </TotalLabel>
          <TotalBox $c={10} $r={21}>
            9,00
          </TotalBox>
          <TotalBox $c={12} $r={21}>
            2,50
          </TotalBox>
          <TotalBox $c={14} $r={21}>
            2,00
          </TotalBox>

          <SaveButton>Mentés</SaveButton>
          <ShapeArrow width="90" height="48" viewBox="0 0 90 48">
            <path d="M1 12h65V1l23 23-23 23V35H1z" fill="#4f81bd" stroke="#385d8a" strokeWidth="1.500" />
          </ShapeArrow>
        </SheetGrid>
        <VScroll>
          <ScrollButton>
            <Tri dir="up" />
          </ScrollButton>
          <VTrack>
            <VThumb />
          </VTrack>
          <ScrollButton>
            <Tri dir="down" />
          </ScrollButton>
        </VScroll>
      </SheetArea>

      <SheetTabs>
        <TabNav>
          <Tri dir="left" c="#c4c4c4" />
          <Tri dir="right" c="#c4c4c4" />
        </TabNav>
        <SheetTab $active $w={74}>
          Munka1
        </SheetTab>
        <SheetTab $w={66}>Adatok</SheetTab>
        <TabDivider />
        <AddSheet>+</AddSheet>
        <HScroll>
          <HDots>⋮</HDots>
          <ScrollButton $w={14} $h={15}>
            <Tri dir="left" c="#555" />
          </ScrollButton>
          <HTrack>
            <HThumb />
          </HTrack>
          <ScrollButton $w={14} $h={15}>
            <Tri dir="right" c="#555" />
          </ScrollButton>
        </HScroll>
      </SheetTabs>

      <StatusBar>
        KÉSZ
        <StatusIcon width="14" height="14" viewBox="0 0 14 14">
          <circle cx="3" cy="3" r="2.500" fill="#fff" />
          <rect x="1" y="6" width="12" height="8" fill="#fff" />
          <rect x="6" y="1" width="7" height="4" fill="#fff" />
          <path d="M3 8h2M6 8h2M9 8h2M3 10h2M6 10h2M9 10h2M3 12h2M6 12h2M9 12h2" stroke={EXCEL_GREEN} />
        </StatusIcon>
        <StatusRight>
          <ViewButton $on>
            <svg width="15" height="15" viewBox="0 0 15 15" fill="none">
              <path d="M.5.500h14v14H.5zM.5 5.200h14M.5 9.800h14M5.200.5v14M9.800.5v14" stroke="#fff" />
            </svg>
          </ViewButton>
          <ViewButton>
            <svg width="15" height="15" viewBox="0 0 15 15" fill="none">
              <path d="M.5.500h14v14H.5z" stroke="#fff" />
              <path d="M3 3h9v9H3zM5 5.500h5M5 7.500h5M5 9.500h5" stroke="#fff" strokeWidth="0.800" />
            </svg>
          </ViewButton>
          <ViewButton>
            <svg width="15" height="15" viewBox="0 0 15 15" fill="none">
              <path d="M.5.500h14v14H.5z" stroke="#fff" />
              <path d="M1 1h5v10H1zM8 1h6v10H8z" fill="#fff" />
            </svg>
          </ViewButton>
          <ZoomGroup>
            <ZoomSign>-</ZoomSign>
            <ZoomTrack>
              <ZoomThumb />
              <ZoomTick />
            </ZoomTrack>
            <ZoomSign>+</ZoomSign>
          </ZoomGroup>
          <ZoomValue>85%</ZoomValue>
        </StatusRight>
      </StatusBar>

      <Taskbar>
        <TaskSlot>
          <IeIcon />
        </TaskSlot>
        <TaskSlot $on>
          <FolderIcon />
        </TaskSlot>
        <TaskSlot>
          <LibraryIcon />
        </TaskSlot>
        <TaskSlot>
          <PaintIcon />
        </TaskSlot>
        <TaskSlot>
          <CalcIcon />
        </TaskSlot>
        <TaskSlot $on>
          <ChromeIcon />
        </TaskSlot>
        <TaskSlot>
          <ViberIcon />
        </TaskSlot>
        <TaskSlot>
          <AccessIcon />
        </TaskSlot>
        <TaskSlot $on>
          <ExcelMark s={32} />
        </TaskSlot>
        <Tray>
          <TrayIcon>
            <Tri dir="up" c="#fff" />
          </TrayIcon>
          <TrayIcon>
            <svg width="16" height="20" viewBox="0 0 16 20" fill="none">
              <path d="M2 1v18" stroke="#fff" strokeWidth="1.500" />
              <path d="M3 2c4-1 6 2 12 1l-2 4 2 4c-6 1-8-2-12-1z" fill="#fff" />
            </svg>
          </TrayIcon>
          <TrayIcon>
            <svg width="18" height="20" viewBox="0 0 18 20" fill="none">
              <rect x="6" y="3" width="11" height="9" stroke="#fff" fill="#3e6fa8" />
              <rect x="1" y="1" width="5" height="9" rx="2" stroke="#fff" fill="#3e6fa8" />
              <path d="M11 12v4M7 17h8" stroke="#fff" strokeWidth="1.500" />
            </svg>
          </TrayIcon>
          <TrayIcon>
            <svg width="18" height="18" viewBox="0 0 18 18" fill="none">
              <path d="M2 6h3l4-4v14l-4-4H2z" fill="#dfe8f3" />
              <path d="M11 6c1.500 2 1.500 4 0 6M13.500 4c2.500 3 2.500 7 0 10" stroke="#fff" />
            </svg>
          </TrayIcon>
          <Clock>
            9:22
            <br />
            2014.02.17.
          </Clock>
        </Tray>
      </Taskbar>
    </Window>
  );
}
